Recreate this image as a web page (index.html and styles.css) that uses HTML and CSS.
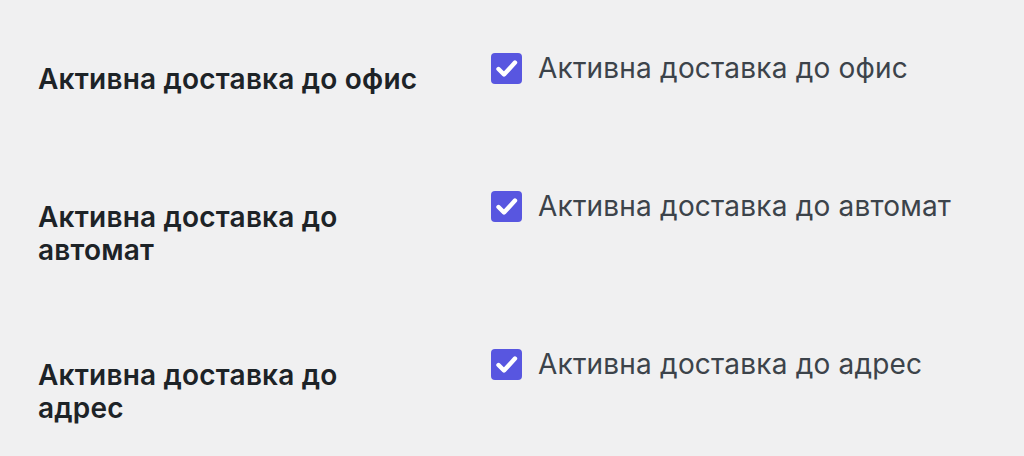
FILE: index.html
```html
<!DOCTYPE html>
<html lang="bg">
<head>
  <meta charset="UTF-8">
  <meta name="viewport" content="width=device-width, initial-scale=1.0">
  <title>Настройки за доставка</title>
  <link rel="stylesheet" href="styles.css">
</head>
<body>
  <div class="form-table">
    <div class="form-row">
      <div class="row-label">Активна доставка до офис</div>
      <div class="row-field">
        <label class="check">
          <span class="check-box">
            <svg viewBox="0 0 31 31" width="31" height="31"><path d="M7.5 16 L13 21.5 L24 9.5" fill="none" stroke="#fff" stroke-width="4.4" stroke-linecap="round" stroke-linejoin="round"/></svg>
          </span>
          Активна доставка до офис
        </label>
      </div>
    </div>
    <div class="form-row">
      <div class="row-label">Активна доставка до автомат</div>
      <div class="row-field">
        <label class="check">
          <span class="check-box">
            <svg viewBox="0 0 31 31" width="31" height="31"><path d="M7.5 16 L13 21.5 L24 9.5" fill="none" stroke="#fff" stroke-width="4.4" stroke-linecap="round" stroke-linejoin="round"/></svg>
          </span>
          Активна доставка до автомат
        </label>
      </div>
    </div>
    <div class="form-row">
      <div class="row-label">Активна доставка до адрес</div>
      <div class="row-field">
        <label class="check">
          <span class="check-box">
            <svg viewBox="0 0 31 31" width="31" height="31"><path d="M7.5 16 L13 21.5 L24 9.5" fill="none" stroke="#fff" stroke-width="4.4" stroke-linecap="round" stroke-linejoin="round"/></svg>
          </span>
          Активна доставка до адрес
        </label>
      </div>
    </div>
  </div>
</body>
</html>
```
FILE: styles.css
```css
body {
  margin: 0;
  background-color: #f0f0f1;
  font-family: Inter, "Noto Sans", sans-serif;
  font-size: 28px;
  line-height: 33px;
  letter-spacing: 0.2px;
  color: #1d2327;
}
.form-table {
  padding: 52px 0 0 38px;
}
.form-row {
  display: grid;
  grid-template-columns: 453px 1fr;
  padding-bottom: 81px;
}
.form-row:last-child {
  padding-bottom: 0;
}
.row-label {
  padding-top: 11px;
  padding-right: 68px;
  font-weight: 600;
}
.row-field {
  min-height: 57px;
}
.check {
  display: flex;
  align-items: center;
  gap: 16px;
  color: #3c434a;
}
.check-box {
  flex-shrink: 0;
  width: 31px;
  height: 31px;
  border-radius: 4px;
  background-color: #5856e0;
  display: flex;
}
```
